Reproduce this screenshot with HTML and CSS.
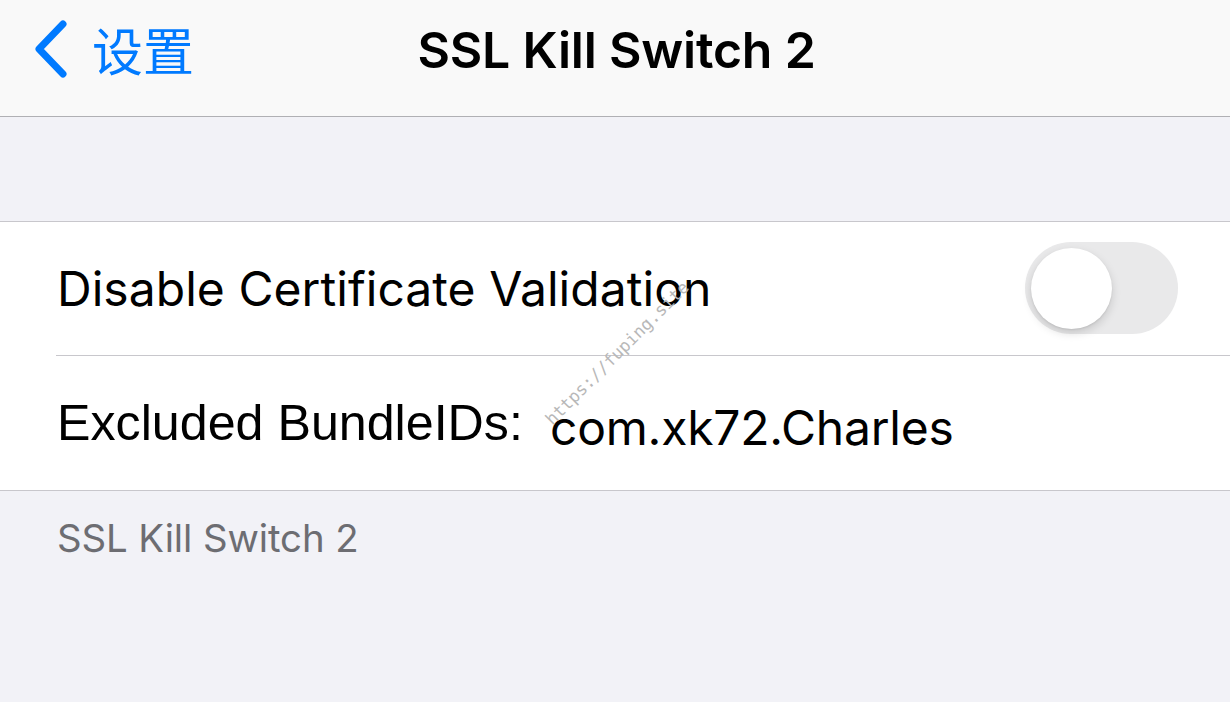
FILE: index.html
```html
<!DOCTYPE html>
<html>
<head>
<meta charset="utf-8">
<link rel="stylesheet" href="styles.css">
</head>
<body>
<div class="page">
  <header class="nav">
    <div class="back">
      <svg class="chev" width="36" height="58" viewBox="0 0 36 58"><path d="M31 4 L7 29 L31 54" fill="none" stroke="#007aff" stroke-width="7" stroke-linecap="round" stroke-linejoin="round"/></svg>
      <span class="back-label">设置</span>
    </div>
    <div class="title">SSL Kill Switch 2</div>
  </header>
  <div class="gap"></div>
  <section class="group">
    <div class="row">
      <span class="label">Disable Certificate Validation</span>
      <div class="switch"><div class="knob"></div></div>
    </div>
    <div class="sep"></div>
    <div class="row row2">
      <span class="label helv">Excluded BundleIDs:</span>
      <span class="value">com.xk72.Charles</span>
    </div>
  </section>
  <div class="footer">SSL Kill Switch 2</div>
  <div class="watermark">https://fuping.site</div>
</div>
</body>
</html>
```
FILE: styles.css
```css
html, body { margin: 0; padding: 0; }
body { width: 1230px; height: 702px; overflow: hidden; background: #f2f2f7; font-family: Inter, "Noto Sans", sans-serif; }
.page { position: relative; width: 1230px; height: 702px; display: flex; flex-direction: column; }
.nav { height: 116px; background: #f9f9f9; border-bottom: 1px solid #b0b0b4; display: flex; align-items: flex-start; position: relative; flex: none; }
.back { display: flex; align-items: center; padding-left: 32px; gap: 24px; margin-top: 20px; }
.chev { display: block; }
.back-label { font-family: "Noto Sans CJK SC", sans-serif; font-size: 51px; color: #007aff; line-height: 58px; }
.title { position: absolute; left: 0; right: 0; top: 23px; text-align: center; font-size: 50px; font-weight: 600; color: #000; line-height: 54px; letter-spacing: -0.2px; padding-left: 3px; }
.gap { height: 104px; flex: none; }
.group { background: #fff; border-top: 1px solid #c8c7cc; border-bottom: 1px solid #c8c7cc; flex: none; }
.row { height: 133px; display: flex; align-items: center; padding-left: 57px; padding-right: 52px; justify-content: space-between; }
.row2 { justify-content: flex-start; height: 134px; }
.sep { height: 1px; background: #c8c7cc; margin-left: 56px; }
.label { font-size: 48px; color: #000; letter-spacing: 0.05px; }
.helv { font-family: "Liberation Sans", Arial, sans-serif; font-size: 50.2px; letter-spacing: 0; }
.value { font-size: 48px; color: #000; margin-left: 27px; margin-top: 8px; letter-spacing: -0.2px; }
.switch { width: 153px; height: 92px; border-radius: 46px; background: #e9e9ea; position: relative; margin-top: -2px; }
.knob { position: absolute; left: 6px; top: 6px; width: 81px; height: 81px; border-radius: 50%; background: #fff; box-shadow: 0 4px 10px rgba(0,0,0,0.15), 0 1px 2px rgba(0,0,0,0.08); }
.footer { padding: 24px 0 0 57px; font-size: 38.4px; color: #6d6d72; letter-spacing: -0.1px; }
.watermark { position: absolute; left: 512px; top: 343px; width: 210px; text-align: center; font-family: "DejaVu Sans Mono", monospace; font-size: 17px; color: #b8b8b8; transform: rotate(-45deg); transform-origin: center; }
```
